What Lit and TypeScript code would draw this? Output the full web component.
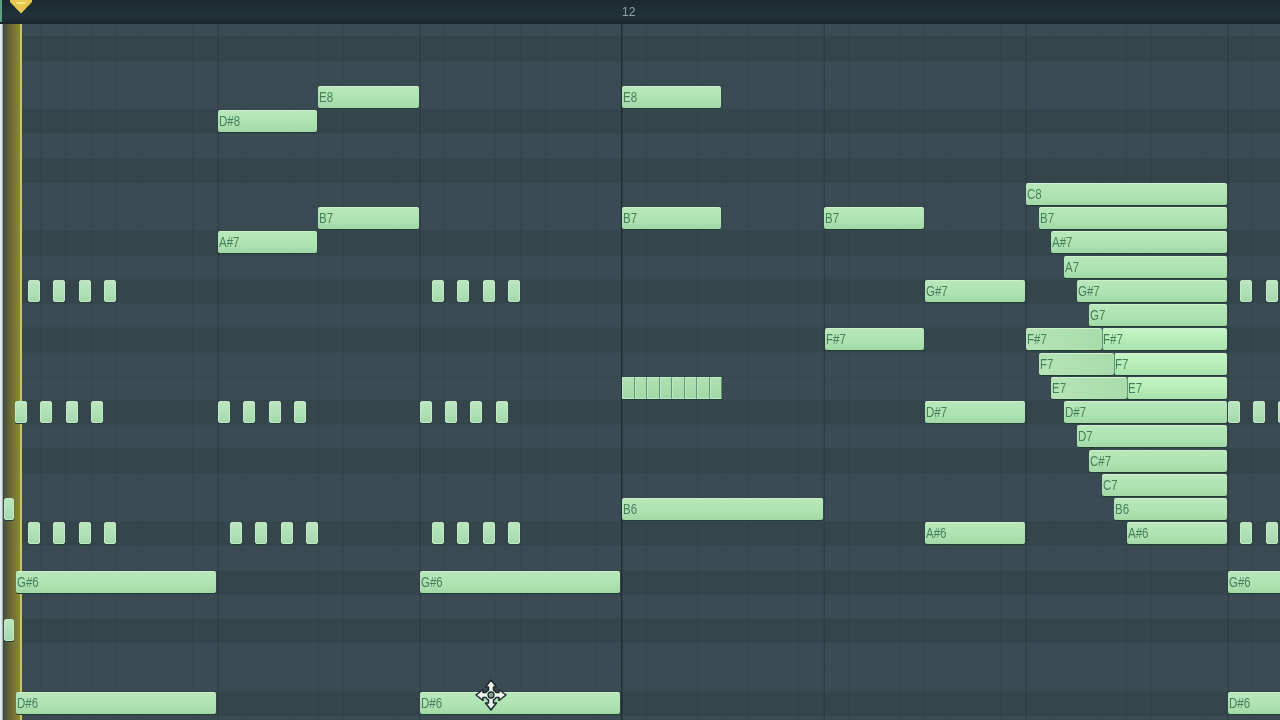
import { LitElement, html, css, svg } from "lit";
import { customElement } from "lit/decorators.js";

const PITCH = 24.24;
const NAMES = ["C", "C#", "D", "D#", "E", "F", "F#", "G", "G#", "A", "A#", "B"];
const midi = (n: string) => {
  const m = n.match(/^([A-G]#?)(\d)$/)!;
  return NAMES.indexOf(m[1]) + 12 * Number(m[2]);
};
const E8 = midi("E8");
const rowTop = (m: number) => 86 + (E8 - m) * PITCH;

type Note = { n: string; x: number; e: number; label?: boolean; kind?: string };
const long: Note[] = ([
  ["E8", 318, 419], ["D#8", 218, 317], ["E8", 622, 721], ["C8", 1026, 1227],
  ["B7", 318, 419], ["B7", 622, 721], ["B7", 824, 924], ["B7", 1039, 1227],
  ["A#7", 218, 317], ["A#7", 1051, 1227], ["A7", 1064, 1227],
  ["G#7", 925, 1025], ["G#7", 1077, 1227], ["G7", 1089, 1227],
  ["F#7", 825, 924], ["D#7", 925, 1025], ["D#7", 1064, 1227],
  ["D7", 1077, 1227], ["C#7", 1089, 1227], ["C7", 1102, 1227],
  ["B6", 622, 823], ["B6", 1114, 1227], ["A#6", 925, 1025], ["A#6", 1127, 1227],
  ["G#6", 16, 216], ["G#6", 420, 620], ["G#6", 1228, 1290],
  ["D#6", 16, 216], ["D#6", 420, 620], ["D#6", 1228, 1290],
] as [string, number, number][]).map(([n, x, e]) => ({ n, x, e, label: true }));

const split: Note[] = [
  { n: "F#7", x: 1026, e: 1102, label: true, kind: "ghost" },
  { n: "F#7", x: 1102, e: 1227, label: true, kind: "bright" },
  { n: "F7", x: 1039, e: 1114, label: true, kind: "ghost" },
  { n: "F7", x: 1114, e: 1227, label: true, kind: "bright" },
  { n: "E7", x: 1051, e: 1127, label: true, kind: "ghost" },
  { n: "E7", x: 1127, e: 1227, label: true, kind: "bright" },
];

const shorts: [string, number[]][] = [
  ["G#7", [28, 53, 79, 104, 432, 457, 483, 508, 1240, 1266]],
  ["D#7", [15, 40, 66, 91, 218, 243, 269, 294, 420, 445, 470, 496, 1228, 1253, 1278]],
  ["A#6", [28, 53, 79, 104, 230, 255, 281, 306, 432, 457, 483, 508, 1240, 1266]],
];
const small: Note[] = shorts.flatMap(([n, xs]) =>
  xs.map((x) => ({ n, x, e: x + 12, kind: "short" }))
);
const run: Note[] = Array.from({ length: 8 }, (_, i) => ({
  n: "E7",
  x: 622 + i * 12.5,
  e: 622 + (i + 1) * 12.5,
  kind: "short run",
}));
const margin: Note[] = [
  { n: "B6", x: 4, e: 14, kind: "short" },
  { n: "F#6", x: 4, e: 14, kind: "short" },
];
const notes = [...long, ...split, ...small, ...run, ...margin];

const rows = Array.from({ length: 31 }, (_, i) => E8 + 4 - i);

const cursor = svg`
  <svg class="cursor" viewBox="0 0 32 32" width="32" height="32" aria-hidden="true">
    <path d="M16 1 L21.5 8 H18.5 V11 A5.5 5.5 0 0 1 21 13.5 H24 V10.5 L31 16 L24 21.5 V18.5 H21 A5.5 5.5 0 0 1 18.5 21 V24 H21.5 L16 31 L10.5 24 H13.5 V21 A5.5 5.5 0 0 1 11 18.5 H8 V21.5 L1 16 L8 10.5 V13.5 H11 A5.5 5.5 0 0 1 13.5 11 V8 H10.5 Z"
      fill="#eef3ee" stroke="#1b2a2c" stroke-width="1.5" stroke-linejoin="round"/>
    <circle cx="16" cy="16" r="3" fill="#7fa88c" stroke="#1b2a2c" stroke-width="1.3"/>
  </svg>`;

@customElement("app-root")
export class AppRoot extends LitElement {
  static styles = css`
    :host {
      display: block;
      position: relative;
      width: 1280px;
      height: 720px;
      overflow: hidden;
      font-family: "Liberation Sans", Arial, sans-serif;
    }
    .app {
      display: flex;
      flex-direction: column;
      width: 1280px;
      height: 720px;
      background: #3a4a52;
      filter: blur(0.5px);
    }
    .ruler {
      position: relative;
      flex: 0 0 22px;
      background: linear-gradient(#1c2a2f, #21323a 70%, #1d2c31);
      border-bottom: 2px solid #1a272b;
    }
    .ruler::before {
      content: "";
      position: absolute;
      left: 0;
      top: 0;
      width: 2px;
      height: 22px;
      background: #5f9f82;
    }
    .bar-no {
      position: absolute;
      left: 622px;
      top: 5px;
      font-size: 12px;
      line-height: 14px;
      color: #93a2a4;
    }
    .marker {
      position: absolute;
      left: 10px;
      top: 0;
    }
    .roll {
      position: relative;
      flex: 1;
      overflow: hidden;
      background: #3a4a52;
    }
    .rows {
      display: flex;
      flex-direction: column;
      position: absolute;
      left: 0;
      right: 0;
      top: -35px;
    }
    .row {
      flex: 0 0 24.24px;
      height: 24.24px;
      box-sizing: border-box;
      background: #3b4b53;
      border-bottom: 1px solid #37474e;
    }
    .row.black {
      background: #35454c;
    }
    .grid {
      position: absolute;
      inset: 0;
      background-image:
        repeating-linear-gradient(90deg, transparent 0 201px, rgba(20, 32, 38, 0.28) 201px 202px),
        repeating-linear-gradient(90deg, transparent 0 24.25px, rgba(20, 32, 38, 0.11) 24.25px 25.25px);
      background-position: 17px 0, 16px 0;
    }
    .bar622 {
      position: absolute;
      left: 621px;
      top: 0;
      bottom: 0;
      width: 1.4px;
      background: #1f2c31;
    }
    .lane {
      position: absolute;
      left: 0;
      top: 0;
      bottom: 0;
      width: 3px;
      background: linear-gradient(90deg, #e8f2f2, #d0dcdc 70%, #6a787b);
    }
    .playhead {
      position: absolute;
      left: 3px;
      top: 0;
      bottom: 0;
      width: 19px;
      box-sizing: border-box;
      background: linear-gradient(90deg, #3f4a3f, #6b6a35 45%, #8c8a35);
      border-right: 2px solid #c9c560;
    }
    .note {
      position: absolute;
      height: 22px;
      box-sizing: border-box;
      border-radius: 2px;
      padding-left: 1px;
      line-height: 20px;
      white-space: nowrap;
      overflow: hidden;
      background: linear-gradient(#b8e8ba, #aee2b1 60%, #a2d8a6);
      border-top: 1px solid #cdf0cf;
      box-shadow: 0 1px 0 #1f3e36;
    }
    .label {
      display: inline-block;
      font-size: 14px;
      color: #45805b;
      transform: scaleX(0.82);
      transform-origin: left center;
    }
    .note.bright {
      background: linear-gradient(#c4f4c4, #b4ecb6 60%, #a9e2ac);
      border-left: 1px solid #5f9574;
      padding-left: 0;
    }
    .note.ghost {
      background: linear-gradient(90deg, #b6e4b6, #a8dcab);
    }
    .note.short {
      padding: 0;
      background: linear-gradient(#bce6c0, #aee0b4 60%, #a4d8aa);
      border: 1px solid #c3e8c7;
      box-shadow: 0 1px 0 #22403a;
      border-radius: 2px;
    }
    .note.run {
      border-radius: 1px;
      border-right: 1px solid #5f9574;
      background: linear-gradient(#aee0b2, #a2d8a8);
      border-top-color: #bfe9c2;
      border-left: 1px solid #bfe9c2;
    }
    .cursor {
      position: absolute;
      left: 474.5px;
      top: 679px;
    }
  `;

  private noteTpl(note: Note) {
    const top = rowTop(midi(note.n)) - 24;
    return html`<div
      class="note ${note.kind ?? ""}"
      style="left:${note.x}px;width:${note.e - note.x}px;top:${top}px"
    >${note.label ? html`<span class="label">${note.n}</span>` : ""}</div>`;
  }

  render() {
    return html`
      <div class="app">
        <div class="ruler">
          <svg class="marker" width="22" height="14" viewBox="0 0 22 14" aria-hidden="true">
            <path d="M0 0 H22 V2 L11 13.5 L0 2 Z" fill="#e6c84e"/>
            <path d="M6 2 H16 L14.5 4 H7.5 Z" fill="#f6e78c"/>
          </svg>
          <span class="bar-no">12</span>
        </div>
        <div class="roll">
          <div class="rows">
            ${rows.map((m) => html`<div class="row ${NAMES[m % 12].includes("#") ? "black" : ""}"></div>`)}
          </div>
          <div class="grid"></div>
          <div class="bar622"></div>
          <div class="lane"></div>
          <div class="playhead"></div>
          ${notes.map((n) => this.noteTpl(n))}
        </div>
      </div>
      ${cursor}
    `;
  }
}
